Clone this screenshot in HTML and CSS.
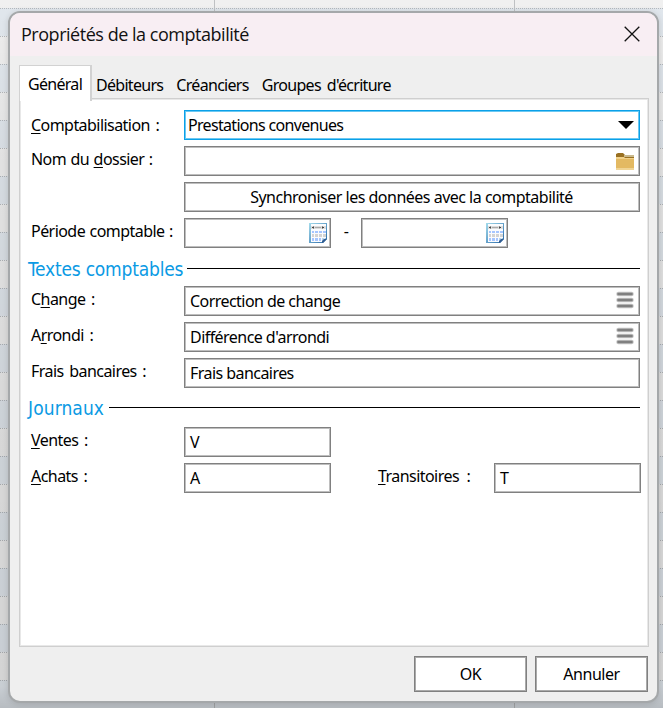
FILE: index.html
```html
<!DOCTYPE html>
<html lang="fr">
<head>
<meta charset="utf-8">
<title>Propriétés de la comptabilité</title>
<link rel="stylesheet" href="styles.css">
</head>
<body>
<svg class="symbols" aria-hidden="true">
  <symbol id="calendar" viewBox="0 0 18 20">
    <linearGradient id="cal-blue" x1="0" y1="0" x2="1" y2="1"><stop offset="0" stop-color="#a5dcec"/><stop offset="1" stop-color="#2668a8"/></linearGradient>
    <path fill="url(#cal-blue)" d="M0 0h18v16l-4 4H0z"/>
    <path fill="#fbfcfe" d="M2 1h15v14l-4 4H2z"/>
    <path fill="#dedede" d="M2 3h15v3H2z"/>
    <path fill="#aaa" d="M6 4h6v1H6z"/>
    <path fill="#444" d="M3 4h2v1H3zM13 4h2v1h-2zM4 3.500h1v2H4zM13 3.500h1v2h-1z"/>
    <path fill="#a6c6ff" d="M3 8h2v2H3zM6 8h3v2H6zM10 8h3v2h-3zM14 8h3v2h-3zM3 15h2v3H3zM6 15h3v3H6zM10 15h2v3h-2z"/>
    <path fill="#d3d3d3" d="M3 11h2v3H3zM6 11h3v3H6zM10 11h3v3h-3zM14 11h3v3h-3z"/>
    <path fill="#315d91" d="M13 20v-4h5l-4 4z"/><path fill="#b9d5ee" d="M13 15h3l-3 3z"/>
  </symbol>
  <symbol id="menu" viewBox="0 0 18 18">
    <path fill="none" stroke="#c4c4c4" stroke-width="4.500" stroke-linecap="round" d="M2.500 3h13M2.500 9h13M2.500 15h13"/>
    <path fill="none" stroke="#808080" stroke-width="2.600" stroke-linecap="round" d="M2.500 3h13M2.500 9h13M2.500 15h13"/>
  </symbol>
</svg>
<main class="dialog">
  <header class="titlebar">
    <h1 class="title">Propriétés de la comptabilité</h1>
    <svg class="close" viewBox="0 0 16 16"><path d="M.7.7l14.600 14.600M15.300.7L.7 15.300"/></svg>
  </header>
  <nav class="tabs">
    <span class="tab active">Général</span><span class="tab">Débiteurs</span><span class="tab">Créanciers</span><span class="tab">Groupes d'écriture</span>
  </nav>
  <section class="panel">
    <div class="row">
      <label class="label first"><u>C</u>omptabilisation :</label>
      <div class="field focus wide">Prestations convenues<svg class="arrow" viewBox="0 0 16 8"><path d="M0 0h16L8 8z"/></svg></div>
    </div>
    <div class="row">
      <label class="label folder-label">Nom du <u>d</u>ossier :</label>
      <div class="field wide"><svg class="folder" viewBox="0 0 18 17"><path fill="#997022" d="M0 1l2-1h5l2 2h9v4H0z"/><path fill="#c9b98d" d="M8 2h10v2H8z"/><path fill="#f1d18a" d="M0 4h8l1 1h9v3H0z"/><path fill="#e3b962" d="M0 6h18v9H0z"/><path fill="#f0d494" d="M0 15h18v2H0z"/></svg></div>
    </div>
    <div class="row">
      <span class="label"></span>
      <button class="field wide sync">Synchroniser les données avec la comptabilité</button>
    </div>
    <div class="row">
      <label class="label period">Période comptable :</label>
      <div class="field short"><svg class="calendar"><use href="#calendar"/></svg></div>
      <span class="dash">-</span>
      <div class="field short"><svg class="calendar"><use href="#calendar"/></svg></div>
    </div>
    <h2 class="heading texts"><span>Textes comptables</span></h2>
    <div class="row">
      <label class="label">C<u>h</u>ange :</label>
      <div class="field wide">Correction de change<svg class="menu"><use href="#menu"/></svg></div>
    </div>
    <div class="row">
      <label class="label">A<u>r</u>rondi :</label>
      <div class="field wide">Différence d'arrondi<svg class="menu"><use href="#menu"/></svg></div>
    </div>
    <div class="row">
      <label class="label">Frais bancaires :</label>
      <div class="field wide">Frais bancaires</div>
    </div>
    <h2 class="heading journals"><span>Journaux</span></h2>
    <div class="row">
      <label class="label"><u>V</u>entes :</label>
      <div class="field short">V</div>
    </div>
    <div class="row">
      <label class="label"><u>A</u>chats :</label>
      <div class="field short">A</div>
      <label class="label second"><u>T</u>ransitoires :</label>
      <div class="field short">T</div>
    </div>
  </section>
  <footer class="actions"><button class="button">OK</button><button class="button">Annuler</button></footer>
</main>
</body>
</html>
```
FILE: styles.css
```css
* { box-sizing: border-box; }
html { height: 100%; }
body {
  margin: 0; padding: 11px 4px 5px 8px; height: 708px; overflow: hidden;
  font: 16px/20px "Noto Sans", sans-serif; letter-spacing: -.55px; color: #000;
  background:
    linear-gradient(#0000 0, #0000000d 20%, #00000018 60%, #0000001c 97%, #00000030 100%),
    linear-gradient(90deg, #0000 214px, #bfc1c3 214px 215px, #0000 215px 514px, #bfc1c3 514px 515px, #0000 515px),
    conic-gradient(from 0deg at 1px 1px, #0000 75%, #b5b9bd 0) 0 8px / 2px 28px,
    repeating-linear-gradient(#e1e7ed 0 28px, #eee 28px 56px) 0 8px / 100% 1400px no-repeat,
    #f0f0f0;
}
.symbols { position: absolute; width: 0; height: 0; }
.dialog {
  height: 692px; border: 2px solid #a5a8aa; border-radius: 12px; overflow: hidden;
  background: #efefef; box-shadow: 0 1px 6px #0002; display: flex; flex-direction: column;
}
.titlebar { height: 43px; flex: none; background: #f8eef3; display: flex; align-items: center; justify-content: space-between; padding: 0 17px 2px 11px; }
.title { font: 18px/24px "Open Sans", sans-serif; letter-spacing: -.47px; margin: 0; color: #111; }
.close { width: 16px; height: 16px; fill: none; stroke: #111; stroke-width: 1.300; }
.tabs { display: flex; height: 42px; flex: none; padding: 9px 0 0 9px; }
.tab { padding: 10px 0 0; margin-right: 13px; height: 33px; white-space: nowrap; letter-spacing: -.7px; word-spacing: 2.5px; }
.tab.active { width: 73px; height: 36px; margin-right: 4px; padding: 8px 0 0 8px; background: #fff; border: 1px solid #d2d2d2; border-right-width: 2px; border-bottom: 0; z-index: 1; }
.panel { width: 630px; height: 549px; flex: none; margin-left: 9px; padding: 11px 8px 0 10px; background: #fff; border: 1px solid #cfcfcf; box-shadow: inset 0 0 0 1px #e8e8e8; display: flex; flex-direction: column; gap: 6px; }
.row { display: flex; height: 30px; flex: none; }
.label { width: 154px; flex: none; padding: 3px 0 0 1px; white-space: nowrap; word-spacing: 2px; }
.label.first { padding-top: 5px; }
.label.period, .label.folder-label { word-spacing: .8px; }
u { text-underline-offset: 2px; text-decoration-thickness: 1px; }
.field { height: 30px; flex: none; border: 1px solid #808080; box-shadow: inset 0 0 0 1px #bebebe; background: #fff; display: flex; align-items: center; padding: 0 6px 0 5px; white-space: nowrap; }
.field svg { margin-left: auto; flex: none; }
.wide { width: 456px; }
.short { width: 147px; padding-right: 3px; }
.focus { border-color: #0aa0e8; box-shadow: inset 0 0 0 1px #6cc8f2; padding: 0 5px 0 3px; letter-spacing: -.68px; }
.sync { font: inherit; letter-spacing: -.5px; justify-content: center; color: #000; }
.arrow { width: 16px; height: 8px; }
.folder { width: 18px; height: 17px; margin-right: -1px; }
.calendar { width: 18px; height: 20px; }
.field .menu { width: 18px; height: 18px; margin-top: -3px; margin-right: -1px; }
.dash { width: 30px; text-align: center; padding-top: 3px; }
.heading { display: flex; flex: none; align-items: center; height: 26px; margin: 0 0 0 -2px; width: 612px; color: #0a9ae4; font: 19px/26px "DejaVu Sans Condensed", "DejaVu Sans", sans-serif; font-stretch: condensed; letter-spacing: -.2px; white-space: nowrap; }
.heading span { width: 159px; flex: none; padding-top: 1px; }
.heading::after { content: ""; height: 1px; flex: 1; background: #000; }
.texts span { padding-top: 3px; }
.texts::after { margin-top: 2px; }
.journals { height: 27px; }
.journals span { width: 81px; letter-spacing: .1px; }
.second { width: 163px; padding-left: 47px; word-spacing: 4px; }
.actions { display: flex; justify-content: flex-end; gap: 8px; padding: 9px 9px 0 0; }
.button { width: 113px; height: 36px; border: 1px solid #808080; box-shadow: inset 0 0 0 1px #aaa; background: #fff; font: inherit; letter-spacing: -.45px; padding: 0; color: #000; }
```
